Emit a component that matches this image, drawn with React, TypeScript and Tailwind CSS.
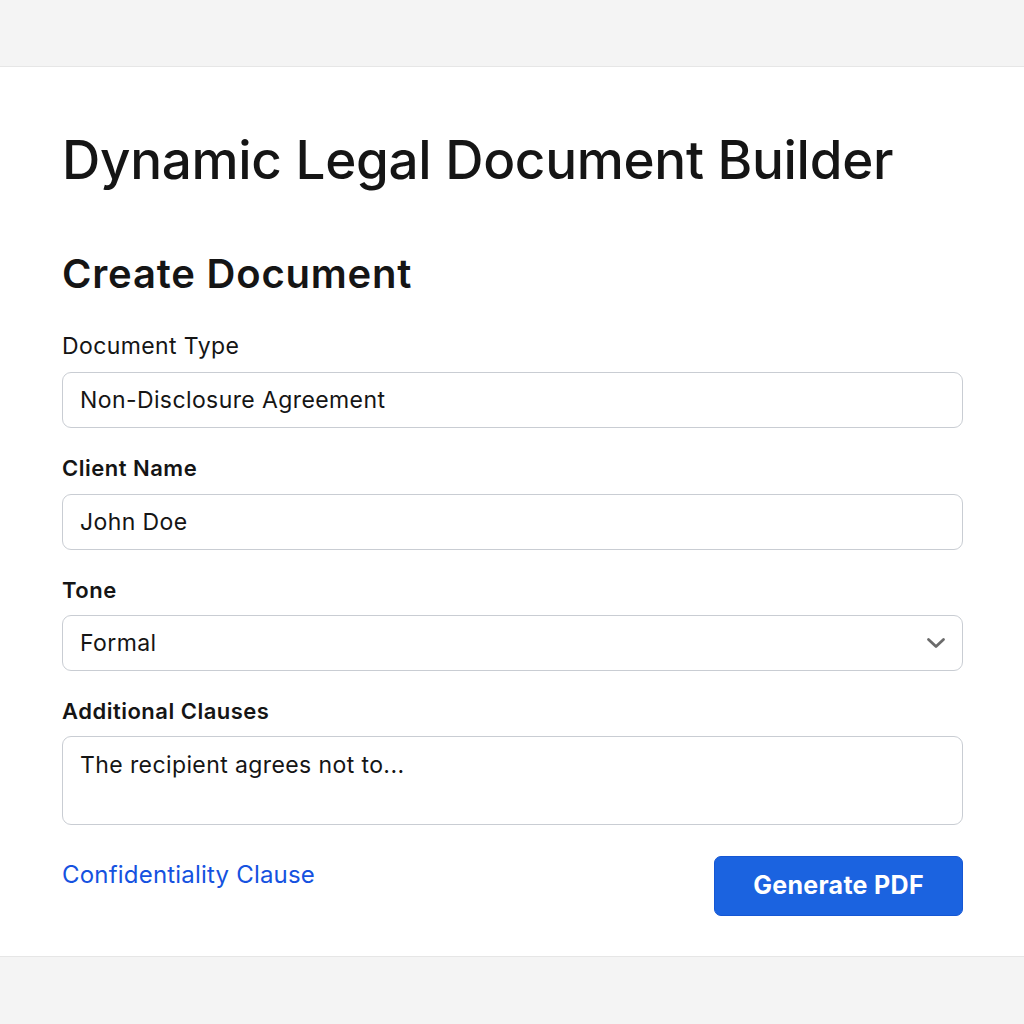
import React from "react";

export default function App() {
  return (
    <div
      className="min-h-[1024px] w-full bg-[#f4f4f4] pt-[66px]"
      style={{ fontFamily: "Inter, 'Noto Sans', sans-serif" }}
    >
      <div className="bg-white border-y border-[#e6e6e6] pl-[62px] pr-[61px] pt-[63px] pb-[40px] text-[#151515]">
        <h1 className="text-[53px] leading-[60px] font-medium tracking-[-0.3px]">
          Dynamic Legal Document Builder
        </h1>
        <h2 className="mt-[62px] text-[40px] leading-[44px] font-semibold tracking-[0.8px]">
          Create Document
        </h2>

        <label className="block mt-[37px] text-[23px] leading-[26px] font-normal tracking-[0.4px]">
          Document Type
        </label>
        <div className="mt-[13px] h-[56px] rounded-[9px] border border-[#c9cdd3] flex items-center px-[17px] text-[23px] tracking-[0.4px]">
          Non-Disclosure Agreement
        </div>

        <label className="block mt-[27px] text-[22px] leading-[26px] font-semibold tracking-[0.5px]">
          Client Name
        </label>
        <div className="mt-[13px] h-[56px] rounded-[9px] border border-[#c9cdd3] flex items-center px-[17px] text-[23px] tracking-[0.4px]">
          John Doe
        </div>

        <label className="block mt-[27px] text-[22px] leading-[26px] font-semibold tracking-[0.5px]">
          Tone
        </label>
        <div className="mt-[12px] h-[56px] rounded-[9px] border border-[#c9cdd3] flex items-center justify-between pl-[17px] pr-[16px] text-[23px] tracking-[0.4px]">
          <span>Formal</span>
          <svg width="20" height="12" viewBox="0 0 20 12" fill="none">
            <path
              d="M2.5 2.5L10 9.5L17.5 2.5"
              stroke="#6b6b6b"
              strokeWidth="2.8"
              strokeLinecap="round"
              strokeLinejoin="round"
            />
          </svg>
        </div>

        <label className="block mt-[27px] text-[22px] leading-[26px] font-semibold tracking-[0.5px]">
          Additional Clauses
        </label>
        <div className="mt-[12px] h-[89px] rounded-[9px] border border-[#c9cdd3] px-[17px] pt-[15px] text-[23px] leading-[26px] tracking-[0.4px]">
          The recipient agrees not to...
        </div>

        <div className="mt-[31px] flex items-start justify-between">
          <a className="mt-[5px] text-[24px] leading-[28px] text-[#1552e0] cursor-pointer tracking-[0.2px]">
            Confidentiality Clause
          </a>
          <button className="w-[249px] h-[60px] rounded-[7px] bg-[#1b63e0] border border-[#1557d4] text-white text-[25px] font-bold tracking-[0.3px]">
            Generate PDF
          </button>
        </div>
      </div>
    </div>
  );
}
